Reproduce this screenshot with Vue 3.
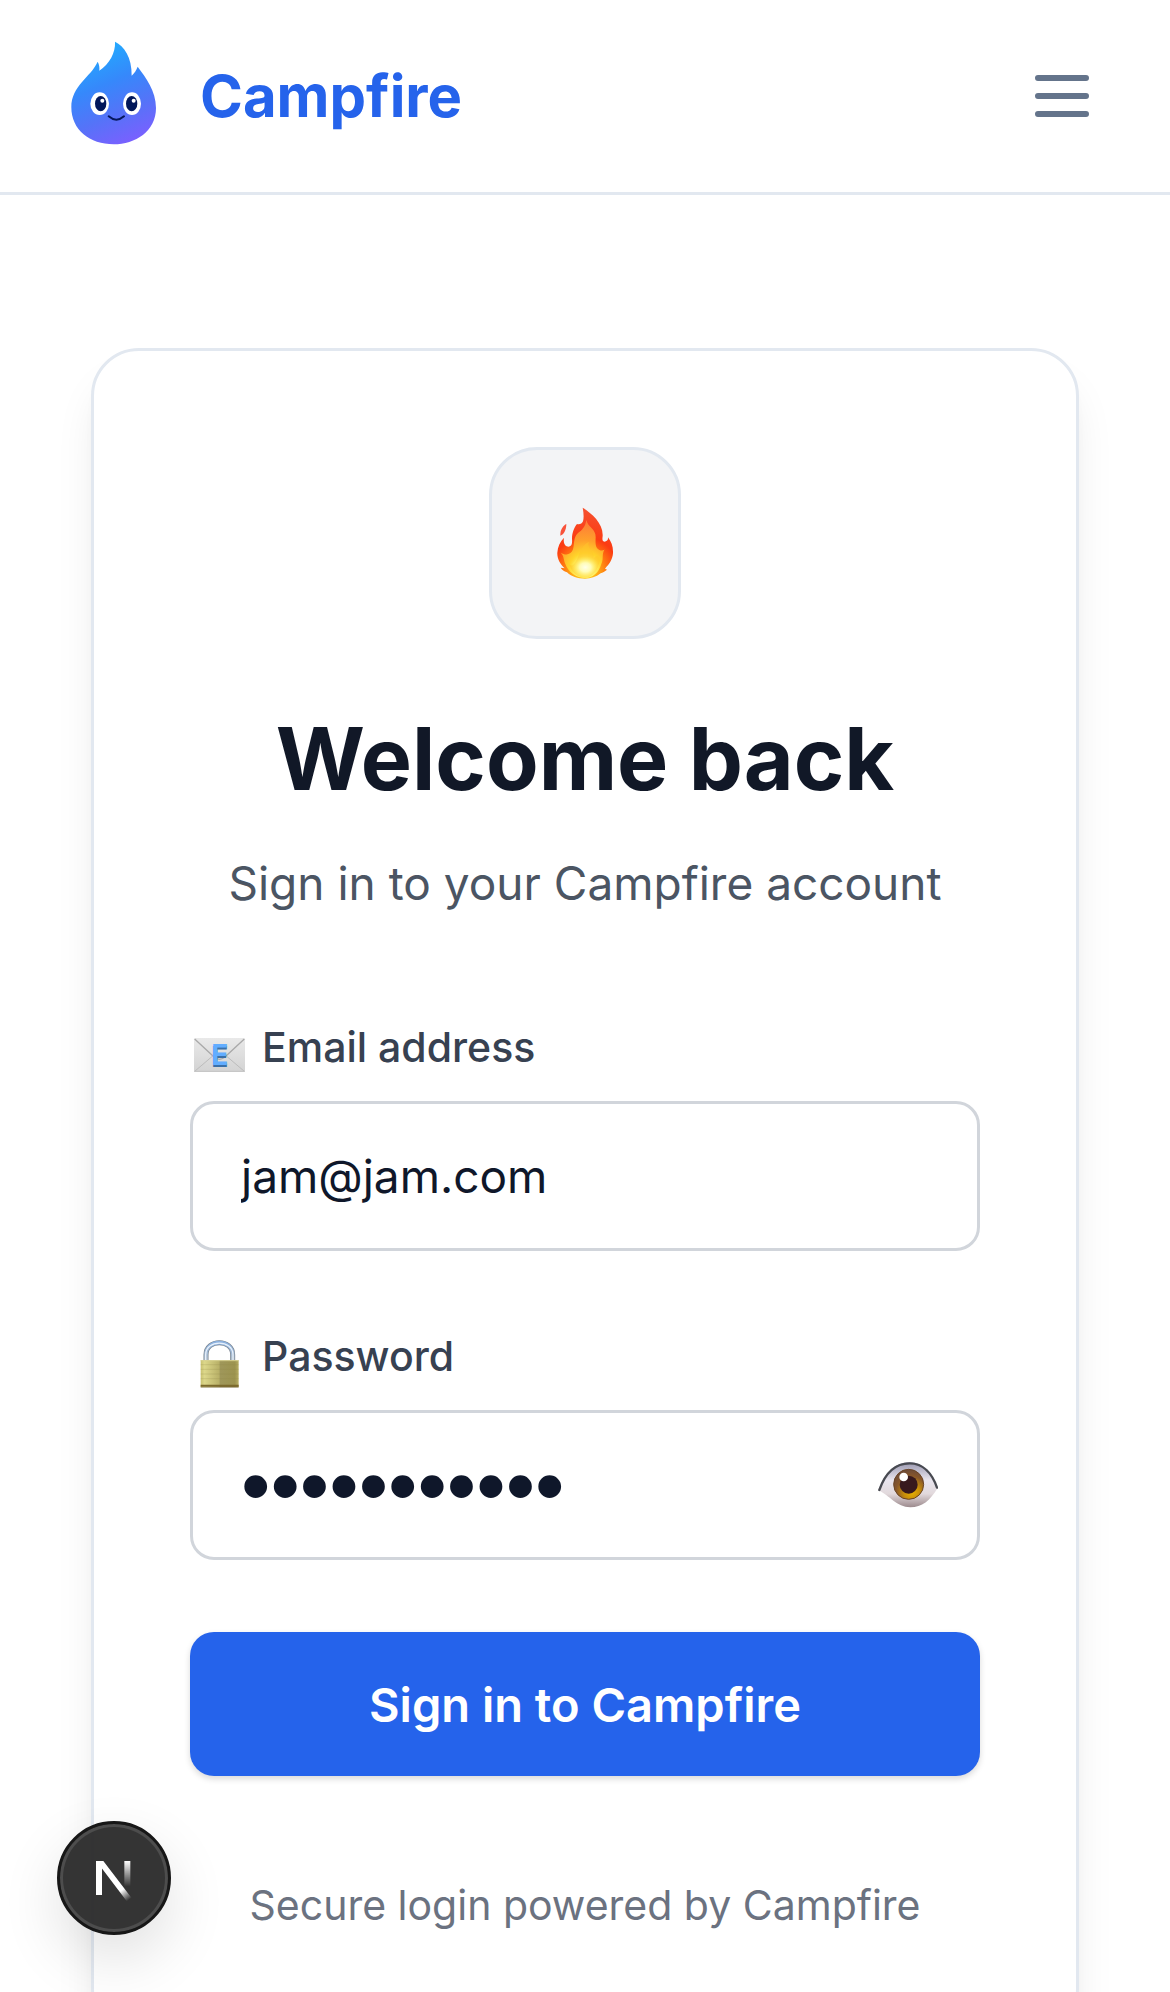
<script setup>
import { ref } from 'vue'

const email = ref('jam@jam.com')
const password = ref('campfire123')
const showPassword = ref(false)
</script>

<template>
  <div class="page">
    <header class="topbar">
      <a class="brand" href="#">
        <svg class="brand-logo" viewBox="66 60 252 336" aria-hidden="true">
          <defs>
            <linearGradient id="logoFill" x1="0.3" y1="0" x2="0.65" y2="1">
              <stop offset="0" stop-color="#1fb0ff" />
              <stop offset="0.4" stop-color="#3688fb" />
              <stop offset="0.7" stop-color="#5573f8" />
              <stop offset="1" stop-color="#7a60ff" />
            </linearGradient>
          </defs>
          <path fill="url(#logoFill)" d="M195 65C222 78 246 112 245 167C253 160 259 150 263 140C287 172 318 212 318 264C318 334 256 373 191 373C120 373 64 330 64 262C64 196 122 172 143 125C148 134 149 143 148 152C178 132 197 98 195 65Z" />
          <ellipse cx="149" cy="251" rx="28" ry="34" fill="#fff" />
          <ellipse cx="246" cy="251" rx="27" ry="34" fill="#fff" />
          <ellipse cx="152" cy="251" rx="17" ry="23" fill="#02175a" />
          <ellipse cx="245" cy="251" rx="17" ry="23" fill="#02175a" />
          <circle cx="157" cy="242" r="6" fill="#fff" />
          <circle cx="251" cy="242" r="6" fill="#fff" />
          <path d="M176 289Q199 309 222 289" fill="none" stroke="#06185c" stroke-width="6" stroke-linecap="round" />
        </svg>
        <span>Campfire</span>
      </a>
      <button class="menu" type="button" aria-label="Open menu">
        <svg viewBox="0 0 72 72" aria-hidden="true">
          <path d="M12 18H60M12 36H60M12 54H60" fill="none" stroke="#64748b" stroke-width="6" stroke-linecap="round" />
        </svg>
      </button>
    </header>

    <main class="content">
      <section class="card">
        <div class="badge">
          <svg viewBox="255 225 180 228" aria-hidden="true">
            <defs>
              <radialGradient id="flameOuter" gradientUnits="userSpaceOnUse" cx="345" cy="420" r="180">
                <stop offset="0.1" stop-color="#ffd21a" />
                <stop offset="0.35" stop-color="#ff7a10" />
                <stop offset="0.55" stop-color="#fb3b12" />
                <stop offset="1" stop-color="#f6502f" />
              </radialGradient>
              <radialGradient id="flameInner" gradientUnits="userSpaceOnUse" cx="346" cy="418" r="145">
                <stop offset="0" stop-color="#fffde0" />
                <stop offset="0.16" stop-color="#fff87a" />
                <stop offset="0.34" stop-color="#ffd42a" />
                <stop offset="0.6" stop-color="#ffa02b" />
                <stop offset="1" stop-color="#fd7a38" />
              </radialGradient>
              <radialGradient id="flameCore">
                <stop offset="0" stop-color="#ffffe8" />
                <stop offset="0.4" stop-color="#ffffc0" stop-opacity="0.9" />
                <stop offset="1" stop-color="#fff34a" stop-opacity="0" />
              </radialGradient>
            </defs>
            <path fill="url(#flameOuter)" d="M338 233C365 250 400 280 398 318C397 327 396 334 403 335C411 335 415 330 414 322C424 335 430 350 429 370C427 390 418 402 405 416L411 419C404 425 398 427 392 430C378 441 362 446 345 446C323 446 303 439 291 427C282 424 276 419 272 413L284 415C270 402 261 386 262 368C263 350 270 335 282 323C279 339 285 350 296 350C306 349 307 340 306 326C306 308 313 291 321 282C329 284 336 281 339 274C342 264 341 248 338 233Z" />
            <path fill="#f8523a" d="M289 282C281 286 270 298 271 317C282 314 289 298 289 282Z" />
            <path fill="url(#flameInner)" d="M349 270C354 292 378 297 377 322C376 341 376 354 388 360C398 364 402 360 404 358C394 374 402 386 394 402C386 430 368 443 345 444C316 443 294 425 286 402C280 386 282 377 272 368C288 378 304 374 309 358C314 342 309 323 324 309C337 300 346 290 349 270Z" />
            <path fill="#ffc52b" opacity="0.5" d="M357 335C348 352 374 364 371 384C382 376 388 380 389 390C384 425 365 442 345 443C321 442 303 424 297 402C304 410 311 406 316 397C329 377 331 347 357 335Z" />
            <ellipse cx="346" cy="412" rx="42" ry="34" fill="url(#flameCore)" />
          </svg>
        </div>
        <h1>Welcome back</h1>
        <p class="subtitle">Sign in to your Campfire account</p>

        <form class="form" @submit.prevent>
          <div class="field">
            <label for="email">
              <svg viewBox="30 21 180 180" aria-hidden="true">
                <defs>
                  <linearGradient id="paper" x1="0" y1="0" x2="0" y2="1">
                    <stop offset="0" stop-color="#e9e9e9" />
                    <stop offset="1" stop-color="#d3d3d3" />
                  </linearGradient>
                </defs>
                <rect x="42" y="84" width="153" height="102" rx="4" fill="url(#paper)" />
                <path d="M44 184L98 138M193 184L139 138" fill="none" stroke="#bcbcbc" stroke-width="3" />
                <path d="M44 87L103 142Q118 154 134 142L193 87" fill="none" stroke="#a9a9a9" stroke-width="4" />
                <path d="M43 184H194" stroke="#c4c4c4" stroke-width="3" />
                <text x="119" y="170" class="stamp-shadow">E</text>
                <text x="119" y="166" class="stamp">E</text>
              </svg>
              Email address
            </label>
            <input id="email" v-model="email" type="email" autocomplete="email" />
          </div>

          <div class="field">
            <label for="password">
              <svg viewBox="30 18 180 180" aria-hidden="true">
                <defs>
                  <linearGradient id="brass" x1="0" y1="0" x2="1" y2="0">
                    <stop offset="0" stop-color="#c9c271" />
                    <stop offset="0.1" stop-color="#dcd78a" />
                    <stop offset="0.48" stop-color="#b9b168" />
                    <stop offset="0.52" stop-color="#9f975a" />
                    <stop offset="0.9" stop-color="#9c934f" />
                    <stop offset="1" stop-color="#b8ae63" />
                  </linearGradient>
                  <linearGradient id="steel" x1="0" y1="0" x2="0" y2="1">
                    <stop offset="0" stop-color="#8db2e0" />
                    <stop offset="1" stop-color="#b3bfc9" />
                  </linearGradient>
                </defs>
                <path d="M78 124V104C78 56 158 56 158 104V124" fill="none" stroke="#77818b" stroke-width="15" />
                <path d="M78 124V104C78 56 158 56 158 104V124" fill="none" stroke="url(#steel)" stroke-width="11" />
                <path d="M77 120V104C77 58 159 58 159 104V120" fill="none" stroke="#e8f1fb" stroke-width="4" />
                <rect x="62" y="120" width="114" height="82" rx="2" fill="url(#brass)" />
                <path d="M62 134H176M62 148H176M62 162H176M62 176H176" stroke="#8f8748" stroke-width="2" opacity="0.35" />
                <path d="M62 122H176" stroke="#d8d293" stroke-width="3" />
                <path d="M62 197H176" stroke="#7c6a2c" stroke-width="5" />
                <path d="M62 201H176" stroke="#5b4518" stroke-width="2" />
              </svg>
              Password
            </label>
            <div class="password-box">
              <input
                id="password"
                v-model="password"
                :class="{ masked: !showPassword }"
                :type="showPassword ? 'text' : 'password'"
                autocomplete="current-password"
              />
              <button
                class="reveal"
                type="button"
                aria-label="Show password"
                @click="showPassword = !showPassword"
              >
                <svg viewBox="114 180 180 150" aria-hidden="true">
                  <defs>
                    <linearGradient id="eyeball" x1="0" y1="0" x2="0" y2="1">
                      <stop offset="0" stop-color="#9a98b0" />
                      <stop offset="0.4" stop-color="#e9e5ee" />
                      <stop offset="0.7" stop-color="#e2d9dc" />
                      <stop offset="1" stop-color="#9c8a8d" />
                    </linearGradient>
                    <radialGradient id="iris" cx="0.6" cy="0.75" r="0.75">
                      <stop offset="0" stop-color="#e9b400" />
                      <stop offset="0.35" stop-color="#c78d0a" />
                      <stop offset="0.7" stop-color="#87562a" />
                      <stop offset="1" stop-color="#6c4a38" />
                    </radialGradient>
                  </defs>
                  <path fill="url(#eyeball)" d="M115 271C132 219 165 187 209 187C251 187 279 219 293 264C270 302 246 322 211 322C170 322 149 286 115 271Z" />
                  <path d="M118 270C135 221 166 190 209 190C250 190 277 222 291 263" fill="none" stroke="#484a51" stroke-width="7" stroke-linecap="round" />
                  <circle cx="206" cy="253" r="45" fill="url(#iris)" stroke="#6a4425" stroke-width="3" />
                  <circle cx="206" cy="254" r="27" fill="#38191d" />
                  <circle cx="191" cy="231" r="13" fill="#fff" />
                </svg>
              </button>
            </div>
          </div>

          <button class="submit" type="submit">Sign in to Campfire</button>
        </form>

        <p class="footnote">Secure login powered by Campfire</p>
      </section>
    </main>

    <button class="devtools" type="button" aria-label="Open developer tools">
      <svg viewBox="0 -9 120 120" aria-hidden="true">
        <defs>
          <linearGradient id="diagonalFade" gradientUnits="userSpaceOnUse" x1="72" y1="76" x2="103" y2="118">
            <stop offset="0.3" stop-color="#fff" />
            <stop offset="1" stop-color="#fff" stop-opacity="0" />
          </linearGradient>
          <linearGradient id="stemFade" gradientUnits="userSpaceOnUse" x1="0" y1="0" x2="0" y2="76">
            <stop offset="0" stop-color="#fff" />
            <stop offset="1" stop-color="#fff" stop-opacity="0" />
          </linearGradient>
        </defs>
        <path fill="#fff" d="M6 0H24V102H6Z" />
        <path fill="url(#diagonalFade)" d="M6 0H28L118 118L104 128L16 12Z" />
        <path fill="url(#stemFade)" d="M91 0H109V76H91Z" />
      </svg>
    </button>
  </div>
</template>

<style>
body {
  margin: 0;
  background: #fff;
}
</style>

<style scoped>
.page {
  display: flex;
  flex-direction: column;
  height: 100vh;
  overflow-y: auto;
  scrollbar-width: none;
  background: #fff;
  color: #111827;
  font-family: Inter, "Liberation Sans", sans-serif;
}

.topbar {
  display: flex;
  flex: none;
  align-items: center;
  justify-content: space-between;
  height: 192px;
  padding: 0 72px;
  border-bottom: 3px solid #e2e8f0;
}

.brand {
  display: flex;
  align-items: center;
  gap: 44px;
  color: #2563eb;
  font-size: 58px;
  font-weight: 700;
  line-height: 84px;
  text-decoration: none;
}

.brand-logo {
  width: 84px;
  height: 112px;
  overflow: visible;
}

.menu {
  width: 72px;
  height: 72px;
  padding: 0;
  border: 0;
  background: none;
}

.menu svg,
.reveal svg {
  display: block;
  width: 100%;
  height: 100%;
}

.content {
  flex: none;
  padding: 153px 91px;
}

.card {
  display: flex;
  flex-direction: column;
  padding: 96px;
  border: 3px solid #e2e8f0;
  border-radius: 48px;
  background: #fff;
  box-shadow: 0 30px 45px -9px rgba(0, 0, 0, 0.1), 0 12px 18px -12px rgba(0, 0, 0, 0.1);
  text-align: center;
}

.badge {
  display: flex;
  align-items: center;
  justify-content: center;
  align-self: center;
  box-sizing: border-box;
  width: 192px;
  height: 192px;
  border: 3px solid #e2e8f0;
  border-radius: 48px;
  background: #f3f4f6;
}

.badge svg {
  width: 60px;
  height: 76px;
}

h1 {
  margin: 66px 0 0;
  font-size: 86px;
  font-weight: 700;
  line-height: 108px;
}

.subtitle {
  margin: 34px 0 0;
  color: #4b5563;
  font-size: 46px;
  line-height: 72px;
}

.form {
  display: flex;
  flex-direction: column;
  gap: 72px;
  margin-top: 95px;
}

.field {
  display: flex;
  flex-direction: column;
  gap: 21px;
}

label {
  display: flex;
  align-items: center;
  gap: 12px;
  color: #374151;
  font-size: 41px;
  font-weight: 500;
  line-height: 66px;
}

label svg {
  width: 60px;
  height: 60px;
  overflow: visible;
}

.stamp,
.stamp-shadow {
  fill: #62adff;
  font-size: 84px;
  font-weight: 700;
  text-anchor: middle;
}

.stamp-shadow {
  fill: #3b70a8;
}

input {
  box-sizing: border-box;
  width: 100%;
  height: 150px;
  padding: 0 48px;
  border: 3px solid #d1d5db;
  border-radius: 24px;
  outline: none;
  background: #fff;
  color: #0f172a;
  font-family: inherit;
  font-size: 46px;
}

input.masked {
  font-family: "Liberation Sans", Arial, sans-serif;
  font-size: 84px;
}

.password-box {
  position: relative;
}

.reveal {
  position: absolute;
  top: 50px;
  right: 42px;
  width: 60px;
  height: 50px;
  padding: 0;
  border: 0;
  background: none;
}

.submit {
  height: 144px;
  border: 0;
  border-radius: 24px;
  background: #2563eb;
  box-shadow: 0 3px 6px rgba(0, 0, 0, 0.15);
  color: #fff;
  font-family: inherit;
  font-size: 47px;
  font-weight: 600;
}

.footnote {
  margin: 96px 0 0;
  color: #6b7280;
  font-size: 41px;
  line-height: 66px;
}

.devtools {
  position: fixed;
  bottom: 57px;
  left: 57px;
  display: flex;
  align-items: center;
  justify-content: center;
  width: 114px;
  height: 114px;
  padding: 0;
  border: 3px solid #171717;
  border-radius: 50%;
  background: rgba(41, 41, 41, 0.95);
  box-shadow: inset 0 0 0 3px #4d4d4d, 0 24px 60px rgba(0, 0, 0, 0.12);
}

.devtools svg {
  width: 40px;
  height: 40px;
  overflow: visible;
}
</style>
